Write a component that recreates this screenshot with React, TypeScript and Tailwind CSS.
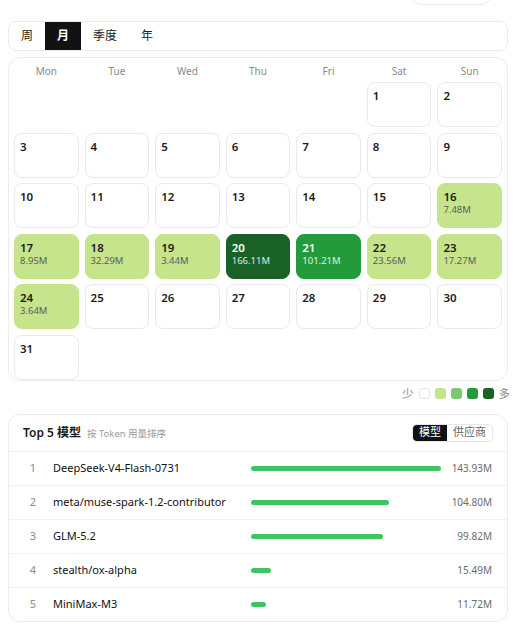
import React from "react";

type Day = { day: number; tokens?: string; level?: number };

const weekDays = ["Mon", "Tue", "Wed", "Thu", "Fri", "Sat", "Sun"];

const usage: Record<number, { tokens: string; level: number }> = {
  16: { tokens: "7.48M", level: 1 },
  17: { tokens: "8.95M", level: 1 },
  18: { tokens: "32.29M", level: 1 },
  19: { tokens: "3.44M", level: 1 },
  20: { tokens: "166.11M", level: 4 },
  21: { tokens: "101.21M", level: 3 },
  22: { tokens: "23.56M", level: 1 },
  23: { tokens: "17.27M", level: 1 },
  24: { tokens: "3.64M", level: 1 },
};

const levelStyles = [
  "bg-white border-[#e9e9e9] text-[#1a1a1a]",
  "bg-[#c6e48b] border-[#c6e48b] text-[#1a1a1a]",
  "bg-[#7bc96f] border-[#7bc96f] text-[#1a1a1a]",
  "bg-[#239a3b] border-[#239a3b] text-white",
  "bg-[#196127] border-[#196127] text-white",
];

const models = [
  { name: "DeepSeek-V4-Flash-0731", value: 143.93 },
  { name: "meta/muse-spark-1.2-contributor", value: 104.8 },
  { name: "GLM-5.2", value: 99.82 },
  { name: "stealth/ox-alpha", value: 15.49 },
  { name: "MiniMax-M3", value: 11.72 },
];

function buildMonth(): (Day | null)[] {
  // month starts on a Saturday, 31 days
  const cells: (Day | null)[] = [null, null, null, null, null];
  for (let d = 1; d <= 31; d++) {
    const u = usage[d];
    cells.push({ day: d, tokens: u?.tokens, level: u?.level ?? 0 });
  }
  return cells;
}

function DayCell({ cell }: { cell: Day }) {
  const level = cell.level ?? 0;
  const dark = level >= 3;
  return (
    <div
      className={`h-[45px] rounded-lg border px-[5px] pt-[6px] ${levelStyles[level]}`}
    >
      <div className="text-[11.5px] font-semibold leading-[14px]">{cell.day}</div>
      {cell.tokens && (
        <div
          className={`text-[9.5px] leading-[12px] ${dark ? "text-white/85" : "text-[#5b5b5b]"}`}
        >
          {cell.tokens}
        </div>
      )}
    </div>
  );
}

export default function App() {
  const cells = buildMonth();
  const max = models[0].value;

  return (
    <div
      className="min-h-screen bg-white text-[#1a1a1a]"
      style={{ fontFamily: '"Noto Sans", "Noto Sans CJK SC", sans-serif' }}
    >
      <div className="ml-2 w-[500px]">
        <div className="-mt-[27px] flex justify-end pr-[17px]">
          <div className="h-8 w-20 rounded-[10px] border border-[#ececec]" />
        </div>

        {/* range tabs */}
        <div className="mt-4 flex h-[30px] overflow-hidden rounded-lg border border-[#ececec] text-[12px]">
          {["周", "月", "季度", "年"].map((t) => (
            <div
              key={t}
              className={`flex items-center px-[12px] ${
                t === "月" ? "bg-[#111214] font-semibold text-white" : "text-[#222]"
              }`}
            >
              {t}
            </div>
          ))}
        </div>

        {/* calendar */}
        <div className="mt-[6px] overflow-hidden rounded-xl border border-[#ececec] px-[5px]">
          <div className="grid h-[24px] grid-cols-7 gap-x-[6px]">
            {weekDays.map((w) => (
              <div
                key={w}
                className="flex items-center justify-center pt-[2px] text-[10px] text-[#8a8a8a]"
              >
                {w}
              </div>
            ))}
          </div>
          <div className="grid grid-cols-7 gap-x-[6px] gap-y-[5.5px]">
            {cells.map((c, i) =>
              c ? <DayCell key={i} cell={c} /> : <div key={i} className="h-[45px]" />,
            )}
          </div>
        </div>

        {/* legend */}
        <div className="-mr-[2px] mt-[7px] flex h-[12px] items-center justify-end gap-[5px] text-[11.5px] text-[#8a8a8a]">
          <span>少</span>
          <span className="h-[11px] w-[11px] rounded-[3px] border border-[#e5e5e5] bg-white" />
          <span className="h-[11px] w-[11px] rounded-[3px] bg-[#c6e48b]" />
          <span className="h-[11px] w-[11px] rounded-[3px] bg-[#7bc96f]" />
          <span className="h-[11px] w-[11px] rounded-[3px] bg-[#239a3b]" />
          <span className="h-[11px] w-[11px] rounded-[3px] bg-[#196127]" />
          <span>多</span>
        </div>

        {/* top models */}
        <div className="mt-[14px] rounded-xl border border-[#ececec]">
          <div className="flex h-[36px] items-center justify-between px-[14px]">
            <div className="flex items-baseline gap-[6px]">
              <span className="text-[12px] font-semibold">Top 5 模型</span>
              <span className="text-[9.5px] text-[#9a9a9a]">按 Token 用量排序</span>
            </div>
            <div className="flex h-[18px] overflow-hidden rounded-[5px] border border-[#e6e6e6] text-[11px]">
              <span className="flex items-center bg-[#111214] px-[6px] text-white">模型</span>
              <span className="flex items-center px-[6px] text-[#666]">供应商</span>
            </div>
          </div>
          {models.map((m, i) => (
            <div
              key={m.name}
              className="flex h-[34px] items-center border-t border-[#f0f0f0] pl-[14px] pr-[15px]"
            >
              <span className="w-[20px] text-center text-[11px] text-[#8a8a8a]">{i + 1}</span>
              <span className="ml-[10px] w-[198px] whitespace-nowrap text-[11px] text-[#111]">
                {m.name}
              </span>
              <div className="w-[190px]">
                <div
                  className="h-[5px] rounded-full bg-[#40c463]"
                  style={{ width: `${(m.value / max) * 100}%` }}
                />
              </div>
              <span className="flex-1 text-right text-[10px] text-[#6b6b6b]">
                {m.value.toFixed(2)}M
              </span>
            </div>
          ))}
        </div>
      </div>
    </div>
  );
}
